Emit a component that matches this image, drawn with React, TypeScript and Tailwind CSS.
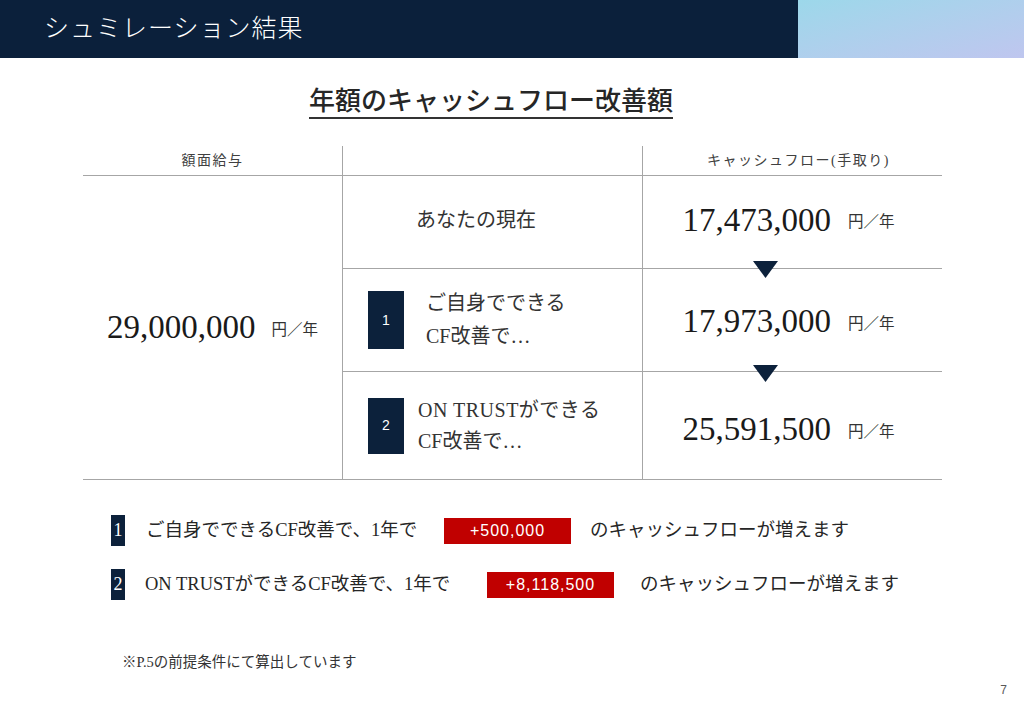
import React from "react";

const SERIF = "font-['Liberation_Serif','Noto_Sans_CJK_JP',serif]";

function Tri() {
  return (
    <svg width="25" height="17" viewBox="0 0 25 17">
      <polygon points="0,0 25,0 12.5,17" fill="#0c213b" />
    </svg>
  );
}

function Amount({ v }: { v: string }) {
  return (
    <div className="flex items-center gap-[17px] pr-[8px]">
      <span className="text-[33px] leading-none text-[#1a1a1a]">{v}</span>
      <span className="text-[15.5px] leading-none text-[#333] mt-[4px]">円／年</span>
    </div>
  );
}

export default function App() {
  return (
    <div className={`w-[1024px] h-[709px] bg-white flex flex-col ${SERIF} text-[#262626]`}>
      <div className="h-[58px] flex shrink-0">
        <div className="w-[798px] bg-[#0b203b] flex items-center pl-[44px]">
          <span className="text-white text-[25px] tracking-[1px] font-light">シュミレーション結果</span>
        </div>
        <div className="flex-1 bg-linear-to-br from-[#9cd8ea] to-[#bfc6ef]" />
      </div>

      <div className="h-[88px] flex justify-center pt-[28px] pr-[42px] shrink-0">
        <span className="text-[26px] leading-[31px] h-[33px] font-medium border-b-2 border-[#333]">
          年額のキャッシュフロー改善額
        </span>
      </div>

      <div className="ml-[83px] w-[859px] grid grid-cols-[259px_300px_300px] grid-rows-[30px_93px_103px_108px] shrink-0">
        <div className="border-b border-[#a6a6a6] flex items-center justify-center text-[14px] tracking-[1.5px] text-[#404040]">
          額面給与
        </div>
        <div className="border-b border-l border-[#a6a6a6]" />
        <div className="border-b border-l border-[#a6a6a6] flex items-center justify-center pl-[12px] text-[14px] tracking-[1.5px] text-[#404040]">
          キャッシュフロー(手取り)
        </div>

        <div className="row-span-3 border-b border-[#a6a6a6] flex items-center justify-center gap-[16px]">
          <span className="text-[33px] leading-none text-[#1a1a1a]">29,000,000</span>
          <span className="text-[15.5px] leading-none text-[#333] mt-[4px]">円／年</span>
        </div>

        <div className="border-l border-b border-[#a6a6a6] flex items-center pl-[73px] pb-[4px]">
          <span className="text-[20px] text-[#333]">あなたの現在</span>
        </div>
        <div className="relative border-l border-b border-[#a6a6a6] flex items-center justify-center pb-[4px]">
          <Amount v="17,473,000" />
          <div className="absolute top-[85px] left-[110px] z-10 flex">
            <Tri />
          </div>
        </div>

        <div className="border-l border-b border-[#a6a6a6] flex items-center pl-[25px]">
          <div className="w-[36px] h-[58px] bg-[#0c213b] flex items-center justify-center text-white text-[14px] font-['Liberation_Sans',sans-serif]">
            1
          </div>
          <div className="ml-[22px] text-[20px] leading-[33px] text-[#333]">
            <div>ご自身でできる</div>
            <div>CF改善で…</div>
          </div>
        </div>
        <div className="relative border-l border-b border-[#a6a6a6] flex items-center justify-center pt-[3px]">
          <Amount v="17,973,000" />
          <div className="absolute top-[96px] left-[110px] z-10 flex">
            <Tri />
          </div>
        </div>

        <div className="border-l border-b border-[#a6a6a6] flex items-center pl-[25px]">
          <div className="w-[36px] h-[56px] bg-[#0c213b] flex items-center justify-center text-white text-[14px] font-['Liberation_Sans',sans-serif]">
            2
          </div>
          <div className="ml-[14px] text-[20px] leading-[31px] text-[#333]">
            <div className="tracking-[0.5px]">ON TRUSTができる</div>
            <div>CF改善で…</div>
          </div>
        </div>
        <div className="border-l border-b border-[#a6a6a6] flex items-center justify-center pt-[8px]">
          <Amount v="25,591,500" />
        </div>
      </div>

      <div className="mt-[35px] ml-[111px] flex flex-col gap-[23px] shrink-0">
        <div className="flex items-center h-[31px]">
          <div className="w-[14px] h-[31px] bg-[#0c213b] text-white flex items-center justify-center text-[18px]">1</div>
          <span className="w-[319px] pl-[21px] text-[18.5px] text-[#262626]">ご自身でできるCF改善で、1年で</span>
          <div className="w-[127px] h-[26px] bg-[#c00000] text-white flex items-center justify-center text-[16px] tracking-[1px] font-['Liberation_Sans',sans-serif]">
            +500,000
          </div>
          <span className="ml-[19px] text-[18.5px] text-[#262626]">のキャッシュフローが増えます</span>
        </div>
        <div className="flex items-center h-[31px]">
          <div className="w-[14px] h-[31px] bg-[#0c213b] text-white flex items-center justify-center text-[18px]">2</div>
          <span className="w-[362px] pl-[20px] text-[18.5px] text-[#262626]">ON TRUSTができるCF改善で、1年で</span>
          <div className="w-[127px] h-[26px] bg-[#c00000] text-white flex items-center justify-center text-[16px] tracking-[1px] font-['Liberation_Sans',sans-serif]">
            +8,118,500
          </div>
          <span className="ml-[26px] text-[18.5px] text-[#262626]">のキャッシュフローが増えます</span>
        </div>
      </div>

      <div className="mt-[52px] ml-[122px] text-[14.5px] text-[#333] shrink-0">※P.5の前提条件にて算出しています</div>

      <div className="mt-auto flex justify-end pr-[17px] pb-[10px] text-[12px] text-[#595959] font-['Liberation_Sans',sans-serif]">
        7
      </div>
    </div>
  );
}
